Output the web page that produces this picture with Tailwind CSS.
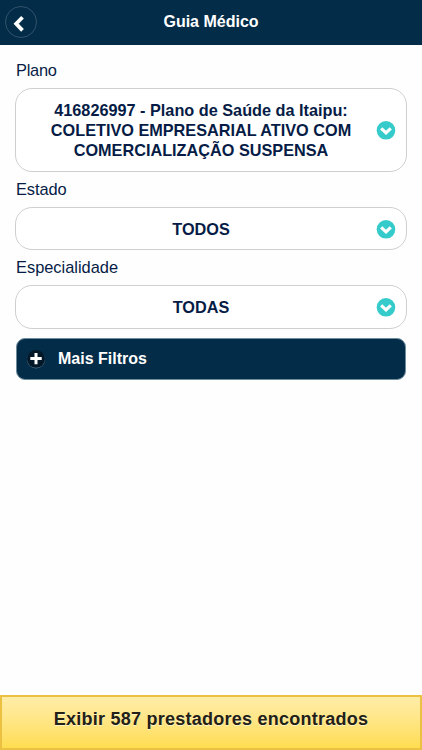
<!DOCTYPE html>
<html lang="pt-BR">
<head>
<meta charset="utf-8">
<title>Guia Médico</title>
<script src="https://cdn.jsdelivr.net/npm/@tailwindcss/browser@4"></script>
</head>
<body class="bg-white">
<div class="flex h-[750px] w-[422px] flex-col overflow-hidden bg-[#fefefe] font-['Liberation_Sans',Arial,sans-serif] text-[16.4px] text-[#061c46]">
  <header class="grid h-[45px] shrink-0 grid-cols-[37px_1fr_37px] items-center bg-[#032c48] pb-px">
    <button class="ml-[5px] flex size-8 items-center justify-center rounded-full border border-[#31536a]" aria-label="Voltar">
      <svg class="size-[30px] shrink-0" viewBox="0 0 30 30" fill="none" stroke="#fff" stroke-width="3.8"><path d="m16.500 10.200-6.300 6.600 6.300 6.600"/></svg>
    </button>
    <h1 class="text-center text-[16px] leading-5 font-bold whitespace-nowrap text-white">Guia Médico</h1>
  </header>
  <main class="flex flex-1 flex-col px-[15px] pt-[15px]">
    <label class="h-[28px] pl-px leading-5 tracking-[-0.25px]">Plano</label>
    <button class="grid h-[84px] w-[392px] grid-cols-[1fr_20px] items-center rounded-[17px] border-[1.5px] border-[#cfcfcf] bg-white pr-[10px] pl-[10px] text-[16.25px] font-bold">
      <span class="text-center leading-[20.3px] whitespace-nowrap">416826997 - Plano de Saúde da Itaipu:<br>COLETIVO EMPRESARIAL ATIVO COM<br>COMERCIALIZAÇÃO SUSPENSA</span>
      <svg class="size-5" viewBox="0 0 20 20"><circle cx="10" cy="10.300" r="9.3" fill="#36cbcb"/><path d="m5.2 8.300 4.8 4.5 4.800-4.500" fill="none" stroke="#fff" stroke-width="3.200"/></svg>
    </button>
    <label class="mt-[7px] h-[28px] pl-px leading-5 tracking-[-0.1px]">Estado</label>
    <button class="grid h-[43px] w-[392px] grid-cols-[1fr_20px] items-center rounded-[17px] border-[1.5px] border-[#cfcfcf] bg-white pr-[10px] pl-[10px] text-[16.25px] font-bold">
      <span class="text-center leading-5">TODOS</span>
      <svg class="size-5" viewBox="0 0 20 20"><circle cx="10" cy="10.300" r="9.3" fill="#36cbcb"/><path d="m5.2 8.300 4.8 4.5 4.800-4.500" fill="none" stroke="#fff" stroke-width="3.200"/></svg>
    </button>
    <label class="mt-[7px] h-[28px] pl-px leading-5">Especialidade</label>
    <button class="grid h-[44px] w-[392px] grid-cols-[1fr_20px] items-center rounded-[17px] border-[1.5px] border-[#cfcfcf] bg-white pr-[10px] pl-[10px] text-[16.25px] font-bold">
      <span class="text-center leading-5">TODAS</span>
      <svg class="size-5" viewBox="0 0 20 20"><circle cx="10" cy="10.300" r="9.3" fill="#36cbcb"/><path d="m5.2 8.300 4.8 4.5 4.800-4.500" fill="none" stroke="#fff" stroke-width="3.200"/></svg>
    </button>
    <button class="mt-[9px] ml-px flex h-[42px] w-[390px] items-center rounded-[9px] border border-[#6f8c9d] bg-[#032c48] pl-[9px] text-[16px] font-bold text-white">
      <svg class="size-5" viewBox="0 0 20 20"><circle cx="10" cy="10.500" r="9" fill="#5b7789"/><circle cx="10" cy="9.800" r="9" fill="#021829"/><path d="M10 3.900v11.400M4.300 9.600h11.400" stroke="#fff" stroke-width="3"/></svg>
      <span class="ml-3 leading-5">Mais Filtros</span>
    </button>
  </main>
  <footer class="flex h-[55px] shrink-0 items-center justify-center border-2 border-[#ecc040] bg-linear-to-b from-[#ffeda8] to-[#ffdd50] text-[18px] font-bold text-[#222017] [text-shadow:0_1px_0_#fff3c4]">
    <span class="pb-[6px] tracking-[0.25px] whitespace-nowrap">Exibir 587 prestadores encontrados</span>
  </footer>
</div>
</body>
</html>
